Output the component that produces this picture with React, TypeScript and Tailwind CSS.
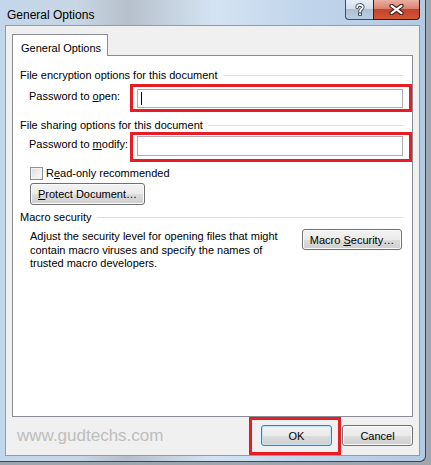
import type { ReactNode } from "react";

const btnBase =
  "flex h-[21px] items-center justify-center rounded-[3px] border text-[11px] leading-[14px] text-black bg-[linear-gradient(to_bottom,#f2f2f2_0%,#ebebeb_50%,#dddddd_50%,#cfcfcf_100%)]";

//======= Win7 style push button =======//
function WinButton({
  children,
  className = "",
  isDefault = false,
}: {
  children: ReactNode;
  className?: string;
  isDefault?: boolean;
}) {
  return (
    <button
      type="button"
      className={`${btnBase} ${
        isDefault
          ? "border-[#3c7fb1] shadow-[inset_0_0_0_1px_#bfe4f8]"
          : "border-[#707070] shadow-[inset_0_0_0_1px_#fbfbfb]"
      } ${className}`}
    >
      {children}
    </button>
  );
}

//======= Group label with rule =======//
function GroupHeader({ label, className = "" }: { label: string; className?: string }) {
  return (
    <div className={`flex h-[14px] items-center ${className}`}>
      <span className="leading-[14px]">{label}</span>
      <div className="ml-[5px] h-px flex-1 bg-[#d6dfe7]" />
    </div>
  );
}

function HelpIcon() {
  return (
    <svg width="10" height="13" viewBox="0 0 10 13">
      <path
        d="M2.2 4.2 C2.2 1.2 7.8 1.2 7.8 4 C7.8 6.2 5 6 5 8.6"
        fill="none"
        stroke="#3b4656"
        strokeWidth="3.6"
        strokeLinecap="round"
      />
      <rect x="3" y="9.6" width="4" height="3.2" rx="0.6" fill="#3b4656" />
      <path
        d="M2.2 4.2 C2.2 1.2 7.8 1.2 7.8 4 C7.8 6.2 5 6 5 8.6"
        fill="none"
        stroke="#ffffff"
        strokeWidth="1.8"
        strokeLinecap="round"
      />
      <rect x="4" y="10.4" width="2" height="1.6" fill="#ffffff" />
    </svg>
  );
}

function CloseIcon() {
  return (
    <svg width="15" height="11" viewBox="0 0 15 11">
      <path d="M2.5 1.8 L12.5 9.2 M12.5 1.8 L2.5 9.2" stroke="#3a1a16" strokeWidth="4.2" strokeLinecap="round" />
      <path d="M2.5 1.8 L12.5 9.2 M12.5 1.8 L2.5 9.2" stroke="#ffffff" strokeWidth="2.2" strokeLinecap="round" />
    </svg>
  );
}

export default function App() {
  return (
    <div className="h-[465px] w-[431px] overflow-hidden bg-[#9ea6b0] font-['Liberation_Sans',Arial,sans-serif] text-[11px] text-black">
      {/* Window frame */}
      <div className="flex h-[462px] w-[426px] flex-col rounded-br-[6px] border-r border-b border-[#3a4756] bg-[linear-gradient(to_right,#c3d6ea_0%,#c8d6e5_18%,#b6c0cb_30%,#d4e3f2_50%,#c0d5eb_72%,#b3cae3_100%)] pb-[5px] pl-[5px] pr-[5px]">
        {/* Title bar */}
        <div className="flex h-[28px] items-start justify-between">
          <span className="pl-[2px] pt-[8px] text-[12px] leading-[14px]">General Options</span>
          <div className="flex">
            <div className="flex h-[20px] w-[28px] items-center justify-center rounded-bl-[4px] border-b border-l border-[#3f4c5e] bg-[linear-gradient(to_bottom,#e7eef7_0%,#d3dfec_45%,#aebfd3_50%,#b9cde3_100%)]">
              <HelpIcon />
            </div>
            <div className="flex h-[20px] w-[47px] items-center justify-center rounded-br-[4px] border-b border-l border-r border-[#3e1a16] bg-[linear-gradient(to_bottom,#eab0a2_0%,#d98370_45%,#c4432a_50%,#d2553a_100%)]">
              <CloseIcon />
            </div>
          </div>
        </div>

        {/* Client area */}
        <div className="flex flex-1 flex-col border border-[#8b9db2] bg-[#f0f0f0] pl-[6px] pt-[8px]">
          {/* Tab */}
          <div className="relative z-10 -mb-px flex h-[22px] w-[96px] items-start border-l border-r border-t border-[#898c95] bg-white pl-[8px] pt-[6px]">
            <span className="leading-[14px]">General Options</span>
          </div>

          {/* Tab panel */}
          <div className="flex h-[362px] w-[401px] flex-col border border-[#898c95] bg-white pl-[7px] pr-[9px] pt-[12px]">
            <GroupHeader label="File encryption options for this document" />

            <div className="mt-[2px] flex items-start pl-[9px]">
              <span className="mt-[5px] w-[101px] leading-[14px]">
                Password to <span className="underline">o</span>pen:
              </span>
              <div className="-mr-[9px] flex-1 border-[3px] border-[#e81c24] pb-[1px] pl-[4px] pr-[6px] pt-[2px]">
                <div className="flex h-[19px] items-center border border-[#abadb3] bg-white">
                  <div className="ml-[3px] h-[13px] w-px bg-black" />
                </div>
              </div>
            </div>

            <GroupHeader label="File sharing options for this document" className="mt-[6px]" />

            <div className="flex items-start pl-[9px]">
              <span className="mt-[5px] w-[101px] leading-[14px]">
                Password to <span className="underline">m</span>odify:
              </span>
              <div className="-mr-[9px] flex-1 border-[3px] border-[#e81c24] pb-[3px] pl-[4px] pr-[6px] pt-px">
                <div className="h-[20px] border border-[#abadb3] bg-white" />
              </div>
            </div>

            <div className="ml-[10px] mt-[4px] flex h-[14px] items-center">
              <div className="h-[13px] w-[13px] border border-[#8e8f8f] bg-[linear-gradient(to_bottom_right,#dcdcdc,#fbfbfb)] shadow-[inset_0_0_0_1px_#f4f4f4]" />
              <span className="ml-[3px] leading-[14px]">
                R<span className="underline">e</span>ad-only recommended
              </span>
            </div>

            <WinButton className="ml-[10px] mt-[3px] h-[22px] w-[115px]">
              <span>
                <span className="underline">P</span>rotect Document…
              </span>
            </WinButton>

            <GroupHeader label="Macro security" className="mt-[5px]" />

            <div className="mt-[5px] flex items-start justify-between pl-[10px] pr-px">
              <p className="mt-px leading-[13.5px]">
                Adjust the security level for opening files that might
                <br />
                contain macro viruses and specify the names of
                <br />
                trusted macro developers.
              </p>
              <WinButton className="w-[100px]">
                <span>
                  Macro <span className="underline">S</span>ecurity…
                </span>
              </WinButton>
            </div>
          </div>

          {/* Bottom row */}
          <div className="flex h-[38px] w-[401px] items-start">
            <span className="ml-[5px] mt-[9px] text-[17px] leading-[20px] text-[#bebebe]">
              www.gudtechs.com
            </span>
            <div className="ml-auto h-[38px] w-[92px] border-[3px] border-[#e81c24] pl-[9px] pt-[5px]">
              <WinButton isDefault className="w-[71px]">
                OK
              </WinButton>
            </div>
            <WinButton className="ml-px mt-[8px] w-[71px]">Cancel</WinButton>
          </div>
        </div>
      </div>
    </div>
  );
}
